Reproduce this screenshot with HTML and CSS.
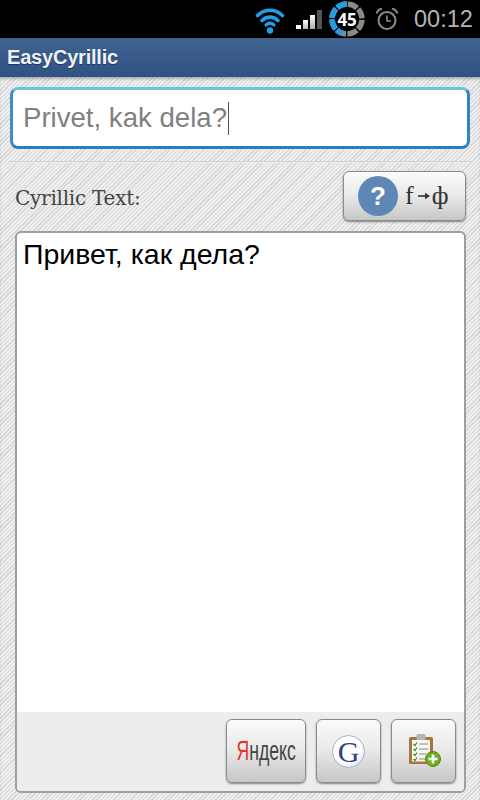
FILE: index.html
```html
<!DOCTYPE html>
<html lang="ru">
<head>
<meta charset="utf-8">
<title>EasyCyrillic</title>
<link rel="stylesheet" href="styles.css">
</head>
<body>
<div class="app">
  <header class="status">
    <svg class="ic-wifi" width="32" height="30" viewBox="0 0 32 30" fill="none" stroke="#1f9fe8" stroke-linecap="round">
      <path d="M3.500 10.500C10.500 3.500 21.500 3.500 28.500 10.500" stroke-width="3.600"/>
      <path d="M8 15.500C12.500 11 19.500 11 24 15.500" stroke-width="3.600"/>
      <path d="M12 20C14.500 17.800 17.500 17.800 20 20" stroke-width="3.200"/>
      <circle cx="16" cy="25.500" r="3.200" fill="#1f9fe8" stroke="none"/>
    </svg>
    <div class="signal">
      <i class="bar b1"></i><i class="bar b2"></i><i class="bar b3"></i><i class="bar b4"></i>
    </div>
    <div class="battery">
      <svg width="38" height="38" viewBox="0 0 38 38" fill="none" stroke-width="5.500">
        <circle cx="19" cy="19" r="15" stroke="#8a8a8a" stroke-dasharray="10.300 1.480" transform="rotate(-87.200 19 19)"/>
        <circle cx="19" cy="19" r="15" stroke="#1f9fe8" stroke-dasharray="6.330 1.480 10.300 1.480 10.300 1.480 10.300 200" transform="rotate(108 19 19)"/>
      </svg>
      <span class="battery-num">45</span>
    </div>
    <svg class="ic-alarm" width="24" height="24" viewBox="0 0 24 24" fill="none" stroke="#8c8c8c">
      <circle cx="12" cy="13.500" r="8.500" stroke-width="2"/>
      <path d="M12 8.500V14H16" stroke-width="1.600"/>
      <path d="M1.500 6.500C2.500 3.500 4.500 2 7 1.800M22.500 6.500C21.500 3.500 19.500 2 17 1.800" stroke-width="2"/>
    </svg>
    <span class="clock">00:12</span>
  </header>
  <div class="titlebar">EasyCyrillic</div>
  <main class="content">
    <div class="field"><span class="typed">Privet, kak dela?</span><span class="caret"></span></div>
    <hr class="divider">
    <div class="label-row">
      <span class="label">Cyrillic Text:</span>
      <button class="btn btn-help">
        <span class="help-dot">?</span>
        <span class="translit">f<svg class="arrow" width="14" height="10" viewBox="0 0 14 10"><path d="M1 5H9" stroke="#333" stroke-width="1.600"/><path d="M8 1.800L13 5L8 8.200Z" fill="#333"/></svg>ф</span>
      </button>
    </div>
    <section class="output">
      <div class="output-text">Привет, как дела?</div>
      <div class="toolbar">
        <button class="btn btn-yandex"><span class="ya-word"><span class="ya-red">Я</span>ндекс</span></button>
        <button class="btn btn-icon">
          <span class="g-ball">G</span>
        </button>
        <button class="btn btn-icon">
          <svg class="clip" width="40" height="36" viewBox="0 0 40 36">
            <rect x="4" y="4" width="24" height="27" rx="1.500" fill="#a9743f"/>
            <rect x="7" y="7" width="18" height="21.500" fill="#f7f7f2"/>
            <rect x="11.500" y="1" width="9" height="6" rx="1.500" fill="#b5b5b5"/>
            <path d="M8.500 11L10 12.500L12 9.500M8.500 16L10 17.500L12 14.500M8.500 21L10 22.500L12 19.500M8.500 26L10 27.500L12 24.500" fill="none" stroke="#2f8f2a" stroke-width="1.200"/>
            <path d="M14 11H23M14 16H23M14 21H21M14 26H20" stroke="#888" stroke-width="1"/>
            <circle cx="28" cy="26" r="7.500" fill="#6fae22" stroke="#4d8a14" stroke-width="1"/>
            <path d="M28 21.500V30.500M23.500 26H32.500" stroke="#fff" stroke-width="2.600"/>
          </svg>
        </button>
      </div>
    </section>
  </main>
</div>
</body>
</html>
```
FILE: styles.css
```css
* { box-sizing: border-box; }
html, body { margin: 0; padding: 0; }
body { width: 480px; height: 800px; overflow: hidden; font-family: "Liberation Sans", Arial, sans-serif; }
.app { display: flex; flex-direction: column; width: 480px; height: 800px; }

.status { height: 38px; flex: none; background: #000; display: flex; align-items: center; padding-left: 254px; }
.ic-wifi { flex: none; margin-top: 1px; }
.signal { display: flex; align-items: flex-end; gap: 2px; height: 19px; margin-left: 10px; margin-top: 1px; }
.bar { display: block; width: 5px; }
.b1 { height: 4px; background: #fff; }
.b2 { height: 9px; background: linear-gradient(#fff, #bbb); }
.b3 { height: 14px; background: linear-gradient(#fff, #aaa); }
.b4 { height: 19px; background: #555; }
.battery { position: relative; width: 38px; height: 38px; margin-left: 6px; flex: none; }
.battery svg { display: block; }
.battery-num { position: absolute; inset: 0; display: flex; align-items: center; justify-content: center; color: #fff; font: bold 17px "Open Sans", sans-serif; letter-spacing: -.3px; }
.ic-alarm { flex: none; margin-left: 9px; margin-top: -1px; }
.clock { margin-left: 15px; color: #b4b4b4; font-size: 23.500px; }

.titlebar { height: 39px; flex: none; padding-left: 7px; color: #eef2f7; font-size: 20px; font-weight: bold; line-height: 39px; letter-spacing: -.2px; background: linear-gradient(#42638f, #2f5285); text-shadow: 0 1px 1px #1d3558; }

.content { flex: 1; display: flex; flex-direction: column; padding: 10px 10px 7px; background-color: #e3e3e3; background-image: repeating-linear-gradient(135deg, #d6d6d6 0 1px, #eeeeee 1px 3px); box-shadow: inset 0 3px 3px -1px rgba(0,0,0,.25); min-height: 0; }

.field { height: 62px; flex: none; display: flex; align-items: center; padding-left: 10px; background: #fff; border-radius: 8px; border: 3px solid; border-color: #6cc5d0 #2f86c4 #2b7cc0 #3b8fc8; color: #808080; font-size: 27.600px; }
.caret { display: block; width: 1px; height: 33px; background: #555; margin-left: 1px; }

.divider { height: 2px; flex: none; margin: 12px 0 0; border: 0; background: #f2eef0; border-top: 1px solid #cfcfcf; }

.label-row { display: flex; align-items: center; justify-content: space-between; height: 50px; flex: none; margin-top: 8px; padding: 0 4px 0 5px; }
.label { font-family: "DejaVu Serif", serif; font-size: 20px; color: #444; letter-spacing: -.25px; padding-top: 4px; }

.btn { display: flex; align-items: center; justify-content: center; padding: 0; border: 1px solid #8b8b8b; border-radius: 6px; background: linear-gradient(#fbfbfb 0%, #e9e9e9 48%, #c7c7c7 100%); box-shadow: 0 1px 2px rgba(0,0,0,.45); }
.btn-help { width: 123px; height: 50px; gap: 7px; justify-content: flex-start; padding-left: 14px; }
.help-dot { width: 40px; height: 40px; border-radius: 50%; background: #5e87b6; color: #fff; font: bold 26px/40px "Liberation Sans", sans-serif; text-align: center; }
.translit { display: flex; align-items: center; font: 26px "Liberation Serif", serif; color: #333; }
.arrow { margin: 0 1px 0 3px; }

.output { flex: 1; min-height: 0; display: flex; flex-direction: column; margin: 10px 4px 0 5px; background: #fff; border: 2px solid #9e9e9e; border-radius: 6px; overflow: hidden; }
.output-text { flex: 1; padding: 6px 0 0 6px; color: #000; font-size: 28.500px; line-height: 30px; }
.toolbar { height: 79px; flex: none; display: flex; justify-content: flex-end; gap: 10px; padding: 7px 8px 0 0; background: #ededed; }
.toolbar .btn { height: 64px; }
.btn-yandex { width: 80px; overflow: hidden; font: 28px "Liberation Sans", sans-serif; color: #444; }
.ya-word { display: block; transform: scaleX(.63); white-space: nowrap; }
.ya-red { color: #e8312a; }
.btn-icon { width: 65px; }
.clip { margin-left: 3px; }
.g-ball { width: 33px; height: 33px; border-radius: 50%; background: radial-gradient(circle at 42% 38%, #fff 55%, #c4cde0); border: 1px solid #aab2c8; color: #2f4285; font: 30px/31px "Liberation Serif", serif; text-align: center; }
```
